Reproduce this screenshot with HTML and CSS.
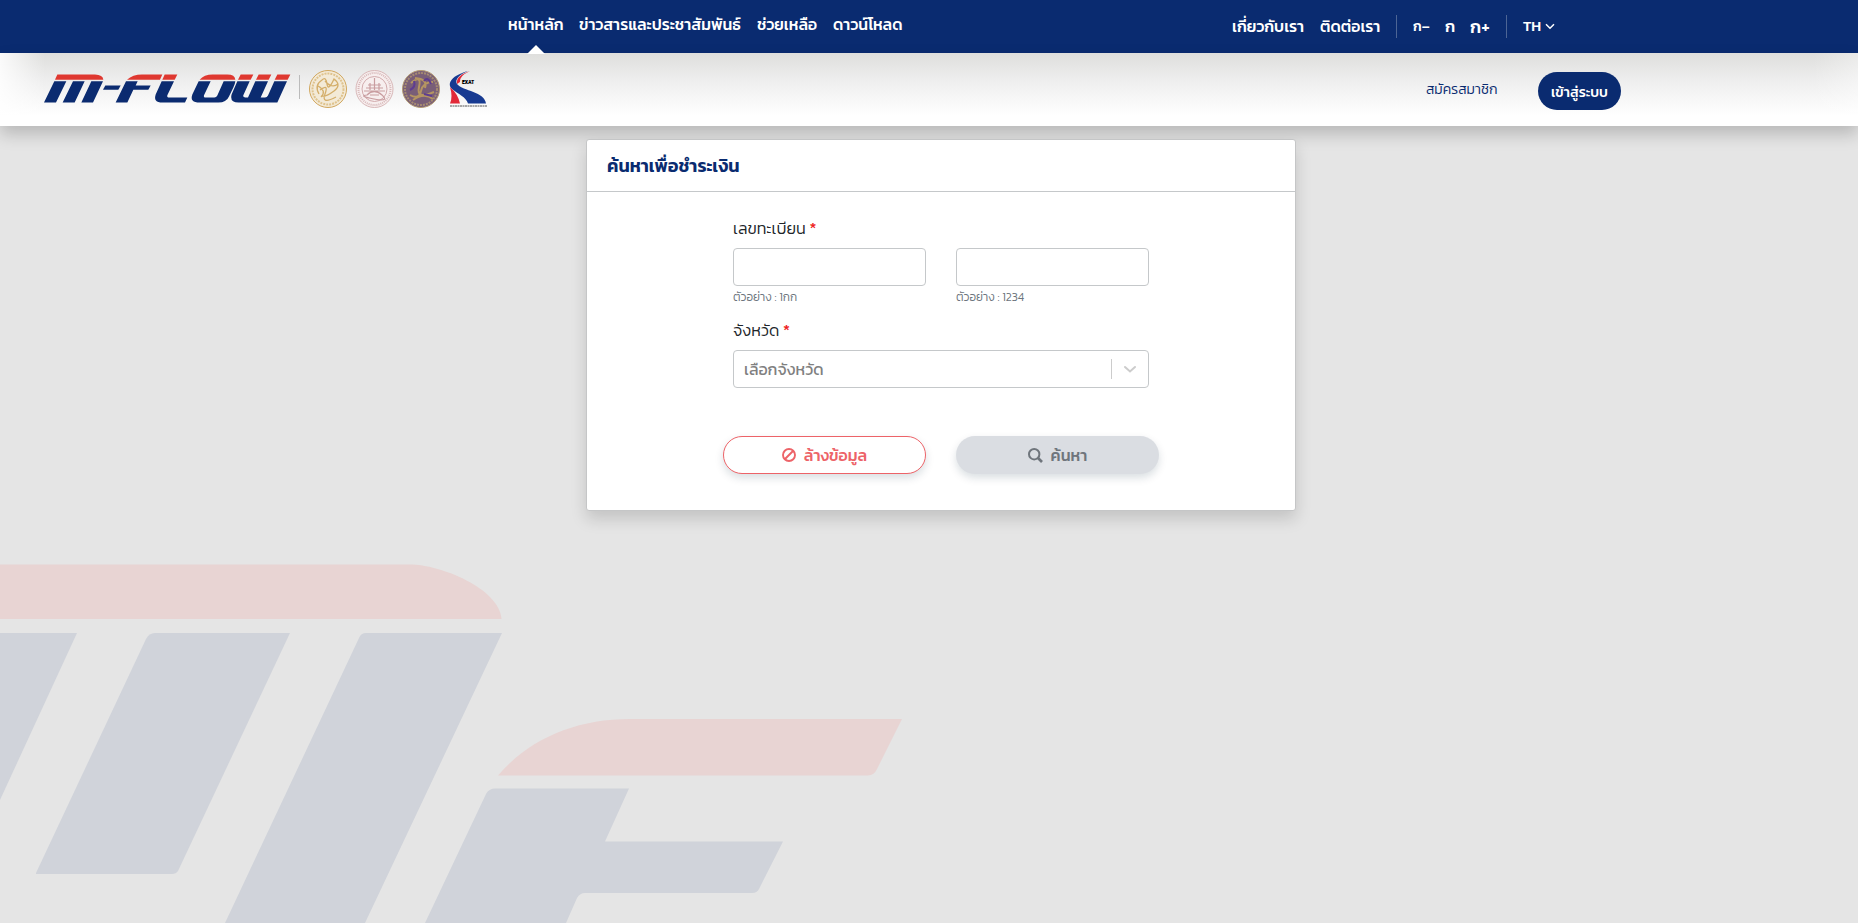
FILE: index.html
```html
<!DOCTYPE html>
<html lang="th">
<head>
<meta charset="utf-8">
<title>M-Flow</title>
<link rel="stylesheet" href="styles.css">
</head>
<body>
<svg class="backdrop" viewBox="0 540 1858 383" aria-hidden="true">
  <g fill="#e8d4d3">
    <path d="M0 564.500H410C440 564.500 499 588 501.500 619H0z"/>
    <path d="M498 775.500C530 738 577 719 630 719H902L877 769Q874 775.500 868 775.500z"/>
  </g>
  <g fill="#d0d3da">
    <path d="M0 633H77L0 800z"/>
    <path d="M36 873L146 639Q149 633 155 633H290L178 871Q176 874 172 874H36z"/>
    <path d="M225 923L359 638Q361 633 366 633H502L365 923z"/>
    <path d="M425 923L486 794Q489 788.500 495 788.500H629L605 841.500H783L759 889Q757 893 752 893H585Q580 893 577 898L566 923z"/>
  </g>
</svg>
<header class="topbar">
  <nav class="menu">
    <a class="current"><span style="width:55px">หน้าหลัก</span></a>
    <a><span style="width:162px">ข่าวสารและประชาสัมพันธ์</span></a>
    <a><span style="width:60px">ช่วยเหลือ</span></a>
    <a><span style="width:70px">ดาวน์โหลด</span></a>
  </nav>
  <nav class="tools">
    <a class="about">เกี่ยวกับเรา</a>
    <a class="contact">ติดต่อเรา</a>
    <i class="rule"></i>
    <a class="small">ก–</a>
    <a class="mid">ก</a>
    <a class="large">ก+</a>
    <i class="rule"></i>
    <a class="lang">TH<svg width="10" height="7" viewBox="0 0 10 7"><path d="M1 1.200L5 5.200L9 1.200" fill="none" stroke="#fff" stroke-width="1.500"/></svg></a>
  </nav>
</header>
<section class="brandbar">
  <svg class="logo" viewBox="132 104 741 86" role="img" aria-label="M-Flow">
    <g fill="#df3830">
      <path d="M172 105H285Q309 106 310 121H165z"/>
      <path d="M381 121Q398 105 426 105H487L480 121z"/>
      <path d="M494 105H532L524 121H487z"/>
      <path d="M599 121Q612 105 638 105H682Q705 105 706 121z"/>
      <path d="M722 105H760L752 121H714zM776 105H814L806 121H768zM832 105H871L863 121H824z"/>
    </g>
    <g fill="#0b2b70">
      <path d="M163 125H199L168 189H132zM219 125H254L224 189H188zM274 125H309L279 189H244z"/>
      <path d="M316 138H362L355 151H309z"/>
      <path d="M378 125H413L407 138H452L445 151H400L382 189H347z"/>
      <path d="M485 125H522L502 167Q500 174 508 174H562L555 189H487Q459 189 467 165z"/>
      <path fill-rule="evenodd" d="M596 125H706Q705 134 700 144L687 171Q679 189 655 189H599Q568 189 577 165zM632 125L612 167Q610 174 617 174H643Q649 174 652 168L671 125z"/>
      <path d="M712 125H749L730 167Q728 174 736 174H744L766 125H804L782 174H795Q801 174 804 168L823 125H861L832 189H716Q688 189 695 164z"/>
    </g>
  </svg>
  <i class="divider"></i>
  <svg class="seals" viewBox="308 68 182 42" aria-hidden="true">
    <g fill="none">
      <circle cx="328" cy="89" r="18.500" fill="#f3ead7" stroke="#d1a75e"/>
      <circle cx="328" cy="89" r="15.500" stroke="#dfc38e" stroke-width="2" stroke-dasharray="2 1"/>
      <path d="M319 94Q314 85 322 80Q326 76 327 84T334 79Q342 85 334 91T322 96M320 90Q329 83 325 94T336 97M325 81Q332 89 338 84M318 86Q327 91 321 97" stroke="#d4ae6a" stroke-width="1.300"/>
      <circle cx="374.500" cy="89" r="18.500" fill="#f7eeee" stroke="#d8b7b8"/>
      <circle cx="374.500" cy="89" r="16" stroke="#d7b8b9" stroke-width="2" stroke-dasharray="1 1"/>
      <circle cx="374.500" cy="89" r="12.500" stroke="#d2abad"/>
      <path d="M364 91H385M366 88H383M368 85H381M370 83V90M374.500 78V90M379 83V90M367 95Q374 88 382 95T374 99T367 95M370 95H379" stroke="#c99da0" stroke-width="1.200"/>
      <circle cx="421" cy="89" r="18.500" fill="#795e77" stroke="#b49b72"/>
      <circle cx="421" cy="89" r="16" stroke="#a68b72" stroke-width="2" stroke-dasharray="2 1"/>
      <path d="M410 95Q419 100 421 91T433 82M411 83Q422 74 419 87T434 92M413 100Q424 92 433 99M415 78Q428 79 425 88" stroke="#b59561" stroke-width="2"/>
      <path d="M410 90Q416 87 414 81M424 81Q428 76 431 84M424 94L432 96" stroke="#5e3c91" stroke-width="2"/>
    </g>
    <path fill="#173a91" d="M468 71C453 75 446 83 452 89C458 94 466 97 468 103.500H486C485 92 463 91 457 84C454 79 461 74 468 71z"/>
    <path fill="#e22938" d="M450 87Q453 97 450 103.500H460Q458 94 450 87zM470 71C461 74 456 78 457 84L460 82Q459 76 470 71z"/>
    <text x="462" y="84" font-size="5" font-weight="bold" textLength="12">EXAT</text>
    <path d="M450 106H487" stroke="#555" stroke-dasharray="2 .5"/>
  </svg>
  <a class="register">สมัครสมาชิก</a>
  <a class="login">เข้าสู่ระบบ</a>
</section>
<main class="card">
  <h1>ค้นหาเพื่อชำระเงิน</h1>
  <form class="form">
    <label class="label">เลขทะเบียน <b>*</b></label>
    <div class="plates">
      <div><input class="field" aria-label="หมวดอักษร"><small>ตัวอย่าง : 1กก</small></div>
      <div><input class="field" aria-label="หมายเลข"><small>ตัวอย่าง : 1234</small></div>
    </div>
    <label class="label province">จังหวัด <b>*</b></label>
    <div class="select"><span>เลือกจังหวัด</span><i></i><svg width="20" height="20" viewBox="0 0 20 20"><path d="M5 8L10 12.500L15 8" fill="none" stroke="#ccc" stroke-width="2" stroke-linecap="round"/></svg></div>
    <div class="actions">
      <button type="button" class="clear"><svg width="14" height="14" viewBox="0 0 14 14"><g fill="none" stroke="#ed6368" stroke-width="1.900"><circle cx="7" cy="7" r="6"/><path d="M3 11L11 3"/></g></svg><span>ล้างข้อมูล</span></button>
      <button type="button" class="search"><svg width="15" height="15" viewBox="0 0 15 15"><g fill="none" stroke="#6f757c" stroke-width="2"><circle cx="6.200" cy="6.200" r="5.200"/><path d="M10 10L14 14" stroke-width="2.600"/></g></svg><span>ค้นหา</span></button>
    </div>
  </form>
</main>
</body>
</html>
```
FILE: styles.css
```css
* { box-sizing: border-box; }
body { margin: 0; height: 923px; overflow: hidden; background: #e5e5e5; font-family: Kanit, "Noto Sans Thai", "Liberation Sans", sans-serif; font-size: 16px; font-weight: 300; color: #212529; }
a, span, label, h1, small { white-space: nowrap; }
.backdrop { position: absolute; left: 0; top: 540px; width: 1858px; height: 383px; z-index: -1; }
.topbar { height: 53px; background: #0a2b70; color: #fff; display: flex; font-weight: 500; font-size: 16px; }
.menu { display: flex; gap: 16px; margin-left: 508px; width: 724px; font-size: 15.85px; }
.menu a { position: relative; line-height: 50px; }
.menu span { display: block; }
.current::after { content: ""; position: absolute; left: 19px; bottom: -1px; border: 9px solid transparent; border-top: 0; border-bottom: 9px solid #fff; }
.tools { display: flex; align-items: center; font-size: 15.9px; }
.tools a { line-height: 53px; }
.about { width: 88px; }
.contact { width: 76px; }
.rule { width: 1px; height: 23px; background: #4d6595; margin-right: 16px; }
.tools .small { width: 32px; font-size: 14px; }
.tools .mid { width: 25px; font-size: 16.5px; }
.tools .large { width: 36px; font-size: 18px; line-height: 51px; }
.tools .lang { font-size: 14.8px; display: flex; align-items: center; gap: 4px; }
.brandbar { height: 73px; display: flex; align-items: flex-start; background: linear-gradient(90deg, rgba(255,255,255,.85), rgba(255,255,255,0) 45px), linear-gradient(270deg, rgba(255,255,255,.35), rgba(255,255,255,0) 45px), linear-gradient(#dededc, #ededed 35%, #fff 85%); box-shadow: 0 8px 16px rgba(0,0,0,.2); }
.logo { width: 247px; height: 29px; margin: 21px 0 0 44px; }
.divider { width: 1px; height: 24px; background: #bbb; margin: 22px 8px 0; }
.seals { width: 182px; height: 42px; margin-top: 15px; }
.register { margin: 25px 0 0 936px; width: 112px; font-size: 14px; line-height: 24px; color: #0a2b70; }
.login { width: 83px; height: 38px; margin-top: 19px; border-radius: 19px; background: #0a2b70; color: #fff; text-align: center; line-height: 41px; font-size: 14px; font-weight: 500; }
.card { width: 710px; height: 372px; margin: 13px 0 0 586px; background: #fff; border: 1px solid #c5c6c7; border-radius: 3px; box-shadow: 0 8px 16px rgba(0,0,0,.15); }
.card h1 { margin: 0; height: 52px; padding-left: 20px; border-bottom: 1px solid #c5c8ca; font-size: 18px; font-weight: 600; line-height: 51px; color: #0a2b70; }
.form { padding: 24px 145px 0 146px; }
.label { display: block; height: 32px; line-height: 25px; font-size: 16.2px; }
.label b { color: #e22; font-weight: 400; }
.plates { display: grid; grid-template-columns: 193px 193px; gap: 30px; height: 70px; }
.field { display: block; width: 193px; height: 38px; border: 1px solid #c5c8ca; border-radius: 4px; background: #fff; }
.plates small { display: block; font-size: 11.8px; line-height: 22px; color: #6c757d; }
.select { width: 416px; height: 38px; display: flex; align-items: center; border: 1px solid #c5c8ca; border-radius: 4px; padding: 0 8px 0 10px; color: #808080; font-weight: 400; }
.select span { flex: 1; }
.select i { width: 1px; height: 20px; background: #ccc; margin-right: 8px; }
.actions { display: flex; gap: 30px; margin: 48px 0 0 -10px; }
.actions button { flex: 0 0 203px; height: 38px; border-radius: 19px; display: flex; align-items: center; justify-content: center; gap: 8px; font: 500 16px Kanit, "Noto Sans Thai", "Liberation Sans", sans-serif; box-shadow: 0 4px 8px rgba(0,40,60,.15); padding: 0; }
.clear { background: #fff; border: 1px solid #ed6368; color: #ed6368; }
.search { background: #dadde2; border: 0; color: #6f757c; }
```
